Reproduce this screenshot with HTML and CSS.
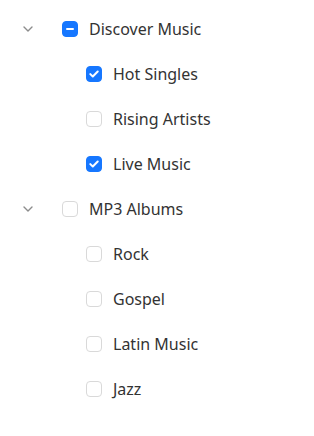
FILE: index.html
```html
<!DOCTYPE html>
<html>
<head>
<meta charset="utf-8">
<link rel="stylesheet" href="styles.css">
</head>
<body>
<ul class="tree">
  <li class="node">
    <span class="switcher"><svg width="10" height="6" viewBox="0 0 10 6"><path d="M1 1l4 4 4-4" fill="none" stroke="#8c8c8c" stroke-width="1.4" stroke-linecap="round" stroke-linejoin="round"/></svg></span>
    <span class="box indeterminate"><span class="dash"></span></span>
    <span class="label">Discover Music</span>
  </li>
  <li class="node child">
    <span class="switcher"></span>
    <span class="box checked"><svg width="10" height="8" viewBox="0 0 10 8"><path d="M1.3 4.1l2.5 2.4 4.9-5" fill="none" stroke="#fff" stroke-width="2" stroke-linecap="round" stroke-linejoin="round"/></svg></span>
    <span class="label">Hot Singles</span>
  </li>
  <li class="node child">
    <span class="switcher"></span>
    <span class="box"></span>
    <span class="label">Rising Artists</span>
  </li>
  <li class="node child">
    <span class="switcher"></span>
    <span class="box checked"><svg width="10" height="8" viewBox="0 0 10 8"><path d="M1.3 4.1l2.5 2.4 4.9-5" fill="none" stroke="#fff" stroke-width="2" stroke-linecap="round" stroke-linejoin="round"/></svg></span>
    <span class="label">Live Music</span>
  </li>
  <li class="node">
    <span class="switcher"><svg width="10" height="6" viewBox="0 0 10 6"><path d="M1 1l4 4 4-4" fill="none" stroke="#8c8c8c" stroke-width="1.4" stroke-linecap="round" stroke-linejoin="round"/></svg></span>
    <span class="box"></span>
    <span class="label">MP3 Albums</span>
  </li>
  <li class="node child">
    <span class="switcher"></span>
    <span class="box"></span>
    <span class="label">Rock</span>
  </li>
  <li class="node child">
    <span class="switcher"></span>
    <span class="box"></span>
    <span class="label">Gospel</span>
  </li>
  <li class="node child">
    <span class="switcher"></span>
    <span class="box"></span>
    <span class="label">Latin Music</span>
  </li>
  <li class="node child">
    <span class="switcher"></span>
    <span class="box"></span>
    <span class="label">Jazz</span>
  </li>
</ul>
</body>
</html>
```

FILE: styles.css
```css
body {
  margin: 6px 8px 8px;
  background: #fff;
  font-family: "Noto Sans", "Open Sans", sans-serif;
  color: #333;
}
.tree {
  list-style: none;
  margin: 0;
  padding: 0;
}
.node {
  display: flex;
  align-items: center;
  height: 45px;
}
.child {
  padding-left: 24px;
}
.switcher {
  width: 40px;
  display: flex;
  justify-content: center;
  align-items: center;
  margin-right: 14px;
}
.box {
  width: 16px;
  height: 16px;
  box-sizing: border-box;
  border: 1px solid #d9d9d9;
  border-radius: 4px;
  background: #fff;
  display: flex;
  align-items: center;
  justify-content: center;
  flex: none;
}
.box.checked,
.box.indeterminate {
  background: #1677ff;
  border-color: #1677ff;
}
.dash {
  width: 8px;
  height: 2px;
  border-radius: 1px;
  background: #fff;
}
.label {
  margin-left: 11px;
  font-size: 16px;
  line-height: 22px;
}
```
